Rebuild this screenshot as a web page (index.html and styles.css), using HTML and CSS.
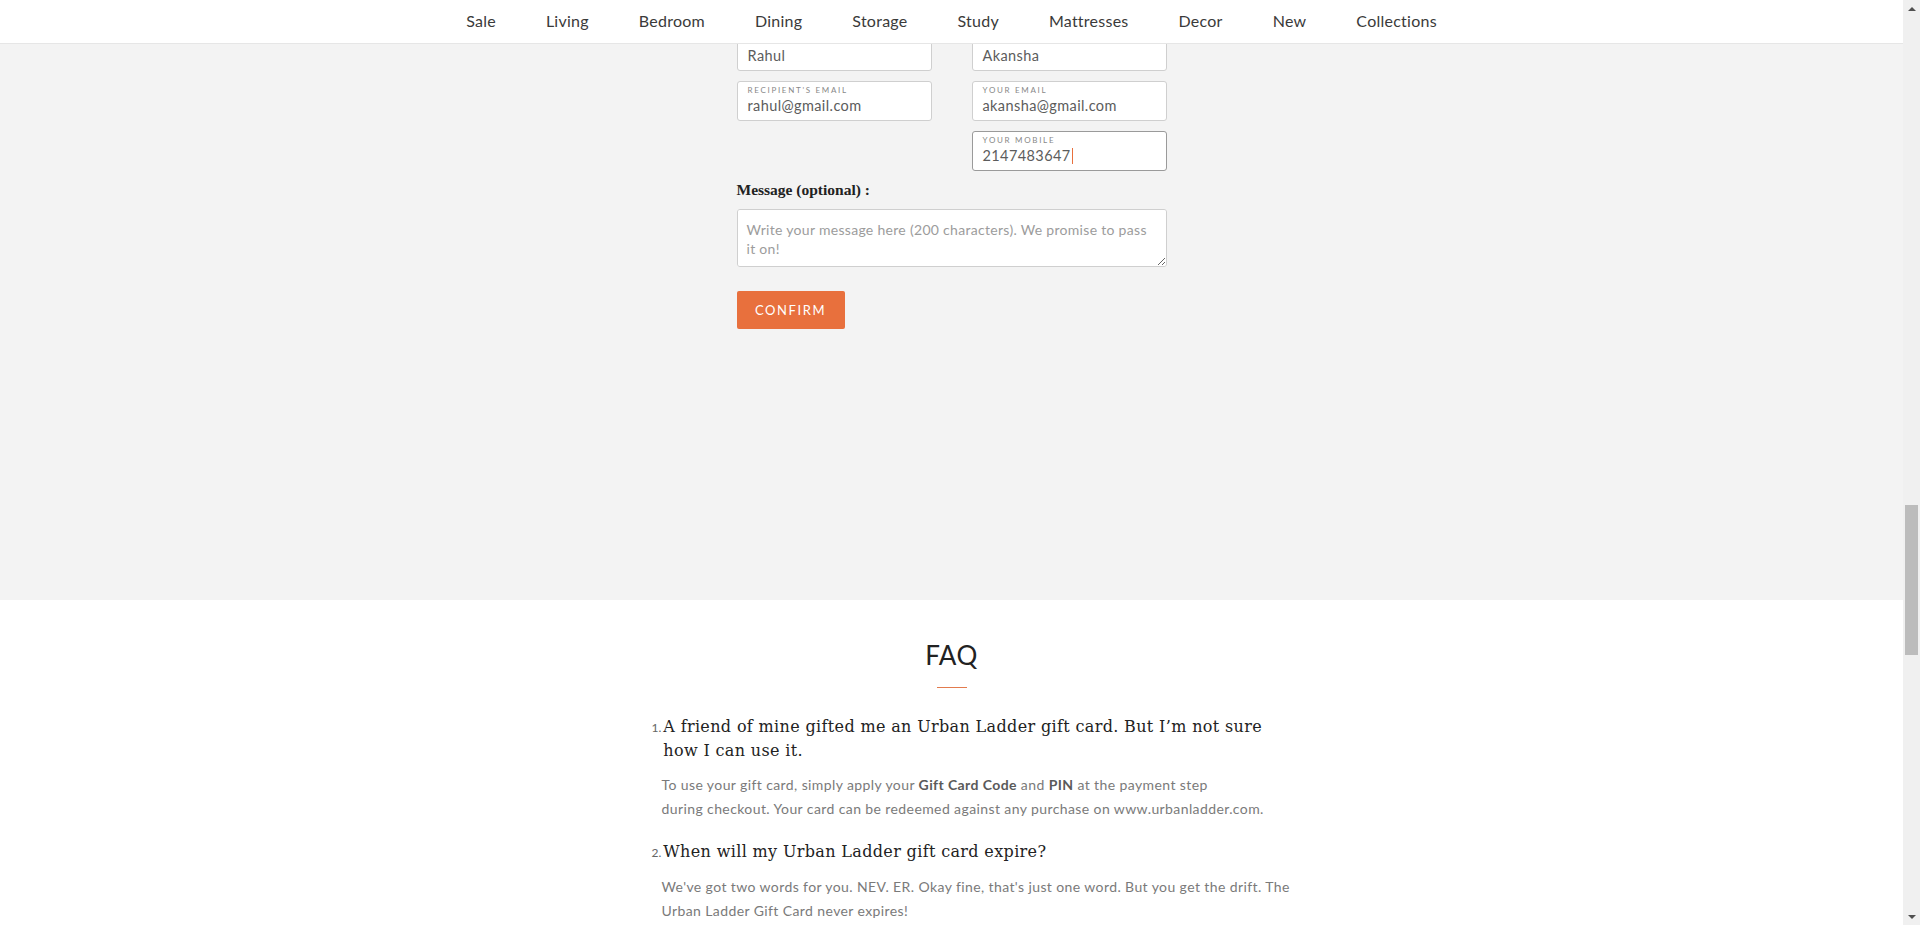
FILE: index.html
```html
<!DOCTYPE html>
<html lang="en">
<head>
<meta charset="utf-8">
<title>Gift Card - Urban Ladder</title>
<link rel="stylesheet" href="styles.css">
</head>
<body>
<div class="viewport">
  <div class="page">
    <header class="topnav">
      <nav class="menu">
        <a class="menu-item" href="#">Sale</a>
        <a class="menu-item" href="#">Living</a>
        <a class="menu-item" href="#">Bedroom</a>
        <a class="menu-item" href="#">Dining</a>
        <a class="menu-item" href="#">Storage</a>
        <a class="menu-item" href="#">Study</a>
        <a class="menu-item" href="#">Mattresses</a>
        <a class="menu-item" href="#">Decor</a>
        <a class="menu-item" href="#">New</a>
        <a class="menu-item" href="#">Collections</a>
      </nav>
    </header>

    <section class="gift-section">
      <form class="gift-form">
        <div class="field-grid">
          <div class="field">
            <span class="field-label">Recipient's name</span>
            <span class="field-value">Rahul</span>
          </div>
          <div class="field">
            <span class="field-label">Your name</span>
            <span class="field-value">Akansha</span>
          </div>
          <div class="field">
            <span class="field-label">Recipient's email</span>
            <span class="field-value">rahul@gmail.com</span>
          </div>
          <div class="field">
            <span class="field-label">Your email</span>
            <span class="field-value">akansha@gmail.com</span>
          </div>
          <div class="field field-focused field-right">
            <span class="field-label">Your mobile</span>
            <span class="field-value">2147483647<span class="caret"></span></span>
          </div>
        </div>
        <label class="message-label" for="msg">Message (optional) :</label>
        <textarea id="msg" class="message-box" placeholder="Write your message here (200 characters). We promise to pass it on!"></textarea>
        <button type="button" class="confirm-btn">Confirm</button>
      </form>
    </section>

    <section class="faq">
      <h2 class="faq-title">FAQ</h2>
      <div class="faq-divider"></div>
      <ol class="faq-list">
        <li class="faq-item">
          <div class="faq-q"><span class="faq-num">1.</span><span class="faq-q-text">A friend of mine gifted me an Urban Ladder gift card. But I’m not sure<br>how I can use it.</span></div>
          <p class="faq-a">To use your gift card, simply apply your <b>Gift Card Code</b> and <b>PIN</b> at the payment step<br>during checkout. Your card can be redeemed against any purchase on www.urbanladder.com.</p>
        </li>
        <li class="faq-item">
          <div class="faq-q"><span class="faq-num">2.</span><span class="faq-q-text">When will my Urban Ladder gift card expire?</span></div>
          <p class="faq-a">We've got two words for you. NEV. ER. Okay fine, that's just one word. But you get the drift. The<br>Urban Ladder Gift Card never expires!</p>
        </li>
      </ol>
    </section>
  </div>

  <div class="scrollbar">
    <div class="sb-arrow sb-up"></div>
    <div class="sb-track"><div class="sb-thumb"></div></div>
    <div class="sb-arrow sb-down"></div>
  </div>
</div>
</body>
</html>
```

FILE: styles.css
```css
* { box-sizing: border-box; }

html, body {
  margin: 0;
  padding: 0;
  height: 100%;
  overflow: hidden;
}

body {
  font-family: "Lato", "Open Sans", sans-serif;
  color: #333;
  background: #fff;
}

.viewport {
  display: flex;
  width: 1920px;
  height: 925px;
  overflow: hidden;
}

.page {
  flex: 1;
  min-width: 0;
  position: relative;
  overflow: hidden;
}

/* ---------- top navigation (sticky bar over the scrolled page) ---------- */
.topnav {
  position: absolute;
  top: 0;
  left: 0;
  right: 0;
  height: 44px;
  background: #fff;
  border-bottom: 1px solid #e6e6e6;
  z-index: 10;
  display: flex;
  justify-content: center;
}

.menu {
  display: flex;
  align-items: center;
  height: 42px;
}

.menu-item {
  padding: 0 25px;
  font-size: 16px;
  letter-spacing: 0.25px;
  color: #3a3a3a;
  text-decoration: none;
  line-height: 20px;
}

/* ---------- gift card form ---------- */
.gift-section {
  background: #f3f3f3;
  height: 600px;
  padding-top: 31px;
}

.gift-form {
  width: 430px;
  margin: 0 auto;
  display: flex;
  flex-direction: column;
  align-items: flex-start;
}

.field-grid {
  display: grid;
  grid-template-columns: 195px 195px;
  column-gap: 40px;
  row-gap: 10px;
  width: 430px;
}

.field {
  height: 40px;
  background: #fff;
  border: 1px solid #cfcfcf;
  border-radius: 3px;
  padding: 3px 10px 0 10px;
  display: flex;
  flex-direction: column;
}

.field-right { grid-column: 2; }

.field-focused { border-color: #9a9a9a; }

.field-label {
  font-size: 8px;
  line-height: 10px;
  letter-spacing: 1.7px;
  text-transform: uppercase;
  color: #888;
}

.field-value {
  margin-top: 2px;
  font-size: 14.5px;
  line-height: 18px;
  color: #5c5c5c;
  letter-spacing: 0.4px;
  display: flex;
  align-items: center;
}

.caret {
  display: inline-block;
  width: 1px;
  height: 16px;
  margin-left: 1px;
  background: #e8703d;
}

.message-label {
  margin-top: 10px;
  font-family: "Liberation Serif", "Times New Roman", serif;
  font-weight: 700;
  font-size: 15.5px;
  line-height: 18px;
  color: #222;
}

.message-box {
  margin-top: 10px;
  width: 430px;
  height: 58px;
  border: 1px solid #cfcfcf;
  border-radius: 3px;
  background: #fff;
  padding: 10px 9px;
  font-family: "Lato", "Open Sans", sans-serif;
  font-size: 14px;
  line-height: 19px;
  letter-spacing: 0.3px;
  color: #555;
  outline: none;
}

.message-box::placeholder { color: #9c9c9c; }

.confirm-btn {
  margin-top: 24px;
  width: 108px;
  height: 38px;
  border: none;
  border-radius: 2px;
  background: #e8703d;
  color: #fff;
  font-family: "Lato", "Open Sans", sans-serif;
  font-size: 13px;
  letter-spacing: 1.6px;
  text-transform: uppercase;
  padding: 0;
  cursor: pointer;
}

/* ---------- FAQ ---------- */
.faq {
  background: #fff;
  padding-top: 39px;
  display: flex;
  flex-direction: column;
  align-items: center;
}

.faq-title {
  margin: 0;
  font-weight: 400;
  font-size: 26px;
  line-height: 32px;
  letter-spacing: 0.5px;
  color: #222;
}

.faq-divider {
  margin-top: 16px;
  width: 30px;
  height: 1px;
  background: #e27b4e;
}

.faq-list {
  list-style: none;
  margin: 27px 0 0 0;
  padding: 0 0 0 40px;
  width: 680px;
}

.faq-item { margin-bottom: 19px; }

.faq-q {
  display: flex;
  align-items: baseline;
  font-family: "DejaVu Serif", "Liberation Serif", serif;
  font-size: 16px;
  letter-spacing: 0.35px;
  line-height: 24px;
  color: #222;
}

.faq-num {
  font-family: "Lato", "Open Sans", sans-serif;
  font-size: 12px;
  letter-spacing: 0;
  color: #666;
  margin-right: 2px;
  flex: none;
}

.faq-a {
  margin: 10px 0 0 10px;
  font-size: 14px;
  line-height: 24px;
  color: #7a7a7a;
  letter-spacing: 0.4px;
  white-space: nowrap;
}

.faq-a b {
  font-weight: 700;
  color: #5a5a5a;
}

/* ---------- scrollbar ---------- */
.scrollbar {
  width: 17px;
  flex: none;
  background: #f0f0f0;
  display: flex;
  flex-direction: column;
  align-items: center;
}

.sb-arrow {
  height: 17px;
  width: 17px;
  display: flex;
  align-items: center;
  justify-content: center;
}

.sb-up::before,
.sb-down::before {
  content: "";
  width: 0;
  height: 0;
  border-left: 4px solid transparent;
  border-right: 4px solid transparent;
}

.sb-up::before { border-bottom: 4px solid #505050; }
.sb-down::before { border-top: 4px solid #505050; }

.sb-track {
  flex: 1;
  width: 17px;
  padding: 488px 2px 0 2px;
}

.sb-thumb {
  height: 150px;
  background: #bcbcbc;
}
```
